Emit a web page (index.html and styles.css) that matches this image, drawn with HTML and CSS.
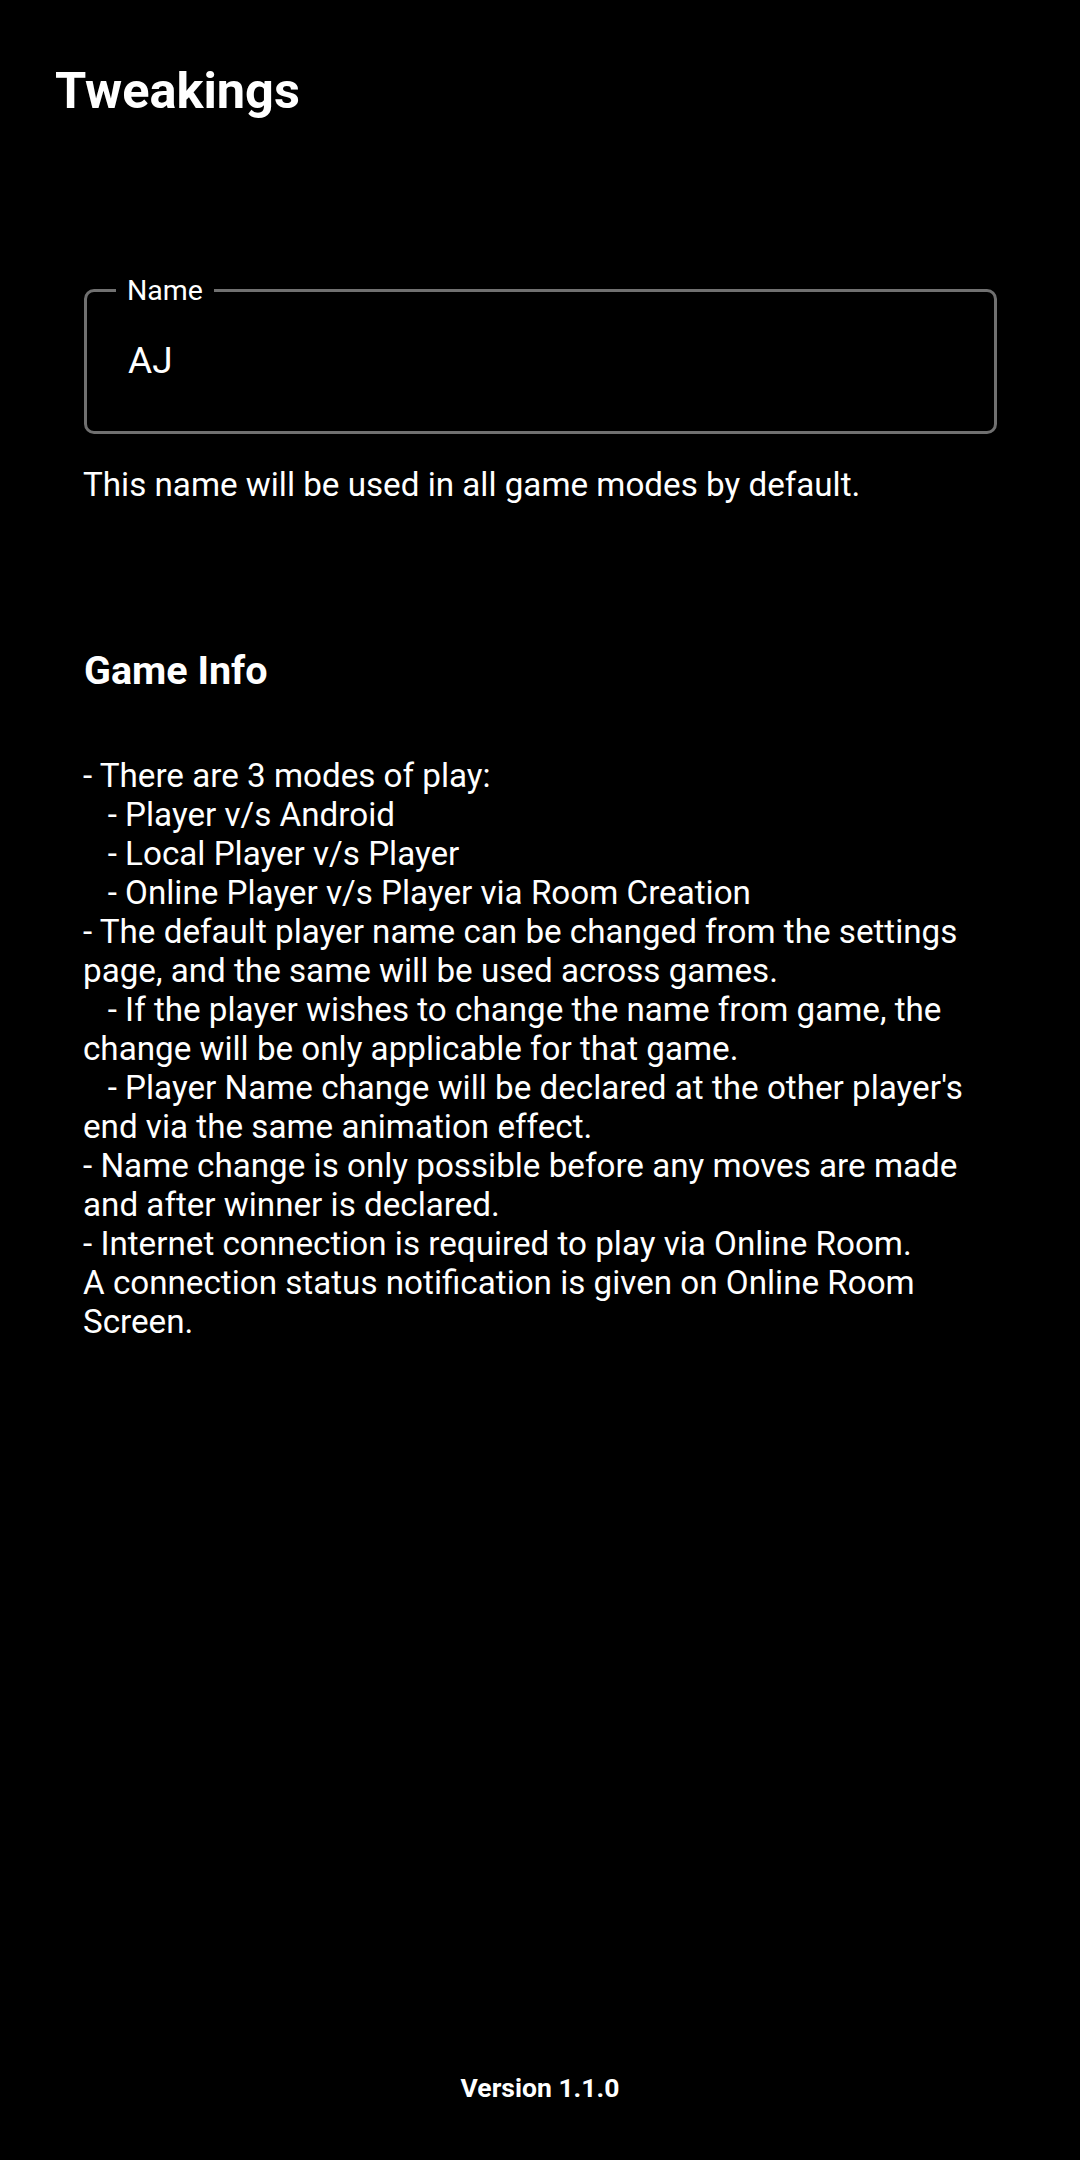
FILE: index.html
```html
<!DOCTYPE html>
<html lang="en">
<head>
<meta charset="utf-8">
<title>Tweakings</title>
<link rel="stylesheet" href="styles.css">
</head>
<body>
<div class="page">
  <header class="topbar">
    <h1 class="title">Tweakings</h1>
  </header>
  <main class="content">
    <fieldset class="field">
      <legend class="field-label">Name</legend>
      <div class="field-value">AJ</div>
    </fieldset>
    <p class="helper">This name will be used in all game modes by default.</p>
    <h2 class="section-title">Game Info</h2>
    <p class="info">- There are 3 modes of play:
   - Player v/s Android
   - Local Player v/s Player
   - Online Player v/s Player via Room Creation
- The default player name can be changed from the settings page, and the same will be used across games.
   - If the player wishes to change the name from game, the change will be only applicable for that game.
   - Player Name change will be declared at the other player's end via the same animation effect.
- Name change is only possible before any moves are made and after winner is declared.
- Internet connection is required to play via Online Room.
A connection status notification is given on Online Room Screen.</p>
  </main>
  <footer class="footer">Version 1.1.0</footer>
</div>
</body>
</html>
```

FILE: styles.css
```css
html, body {
  margin: 0;
  padding: 0;
  background: #000;
}

body {
  font-family: Roboto, "Noto Sans", "Liberation Sans", sans-serif;
  color: #fff;
}

.page {
  display: flex;
  flex-direction: column;
  min-height: 2160px;
  box-sizing: border-box;
}

.topbar {
  padding: 62px 0 0 55px;
}

.title {
  margin: 0;
  font-size: 50.5px;
  line-height: 58px;
  font-weight: 700;
}

.content {
  padding: 0 83px;
  display: flex;
  flex-direction: column;
}

.field {
  margin: 154px 0 0 1px;
  padding: 32px 0 48px 41px;
  border: 3px solid #707070;
  border-radius: 10px;
  min-width: 0;
}

.field-label {
  margin-left: -12px;
  padding: 0 11px;
  font-size: 28.5px;
  line-height: 33px;
  color: #fff;
}

.field-value {
  font-size: 37px;
  line-height: 44px;
}

.helper {
  margin: 31px 0 0;
  font-size: 33.2px;
  line-height: 39px;
}

.section-title {
  margin: 144px 0 0 1px;
  font-size: 39.5px;
  line-height: 46px;
  font-weight: 700;
}

.info {
  margin: 62px 0 0;
  font-size: 33.2px;
  line-height: 39px;
  white-space: pre-wrap;
}

.footer {
  margin-top: auto;
  padding-bottom: 57px;
  text-align: center;
  font-size: 26.5px;
  line-height: 31px;
  font-weight: 700;
}
```
